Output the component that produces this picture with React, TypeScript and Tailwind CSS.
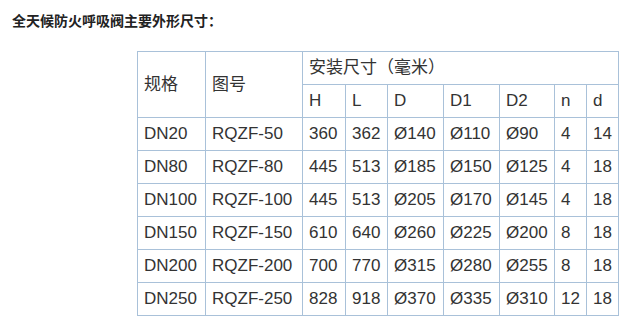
import React from 'react';

const rows = [
  ['DN20', 'RQZF-50', '360', '362', 'Ø140', 'Ø110', 'Ø90', '4', '14'],
  ['DN80', 'RQZF-80', '445', '513', 'Ø185', 'Ø150', 'Ø125', '4', '18'],
  ['DN100', 'RQZF-100', '445', '513', 'Ø205', 'Ø170', 'Ø145', '4', '18'],
  ['DN150', 'RQZF-150', '610', '640', 'Ø260', 'Ø225', 'Ø200', '8', '18'],
  ['DN200', 'RQZF-200', '700', '770', 'Ø315', 'Ø280', 'Ø255', '8', '18'],
  ['DN250', 'RQZF-250', '828', '918', 'Ø370', 'Ø335', 'Ø310', '12', '18'],
];

const widths = [68, 97, 43, 42, 56, 56, 55, 32, 32];
const subHeads = ['H', 'L', 'D', 'D1', 'D2', 'n', 'd'];

const cell = 'border border-[#a9c1d9] pl-[6px] pr-0 h-[33px] p-0 align-middle text-left font-normal whitespace-nowrap';

export default function App() {
  return (
    <div
      className="w-[635px] h-[326px] bg-white text-[#333] overflow-hidden"
      style={{ fontFamily: 'Arial, "Liberation Sans", "Noto Sans CJK SC", sans-serif' }}
    >
      <div className="pl-[12px] pt-[12px] h-[51px] text-[14px] leading-[18px] font-bold text-[#222]">
        全天候防火呼吸阀主要外形尺寸：
      </div>
      <div className="pl-[137px]">
        <table className="border-collapse table-fixed text-[17px] leading-[20px]">
          <colgroup>
            {widths.map((w, i) => (
              <col key={i} style={{ width: w }} />
            ))}
          </colgroup>
          <thead>
            <tr>
              <th rowSpan={2} className={cell}>规格</th>
              <th rowSpan={2} className={cell}>图号</th>
              <th colSpan={7} className={cell}>安装尺寸（毫米）</th>
            </tr>
            <tr>
              {subHeads.map((h) => (
                <th key={h} className={cell}>{h}</th>
              ))}
            </tr>
          </thead>
          <tbody>
            {rows.map((r) => (
              <tr key={r[0]}>
                {r.map((c, i) => (
                  <td key={i} className={cell}>{c}</td>
                ))}
              </tr>
            ))}
          </tbody>
        </table>
      </div>
    </div>
  );
}
